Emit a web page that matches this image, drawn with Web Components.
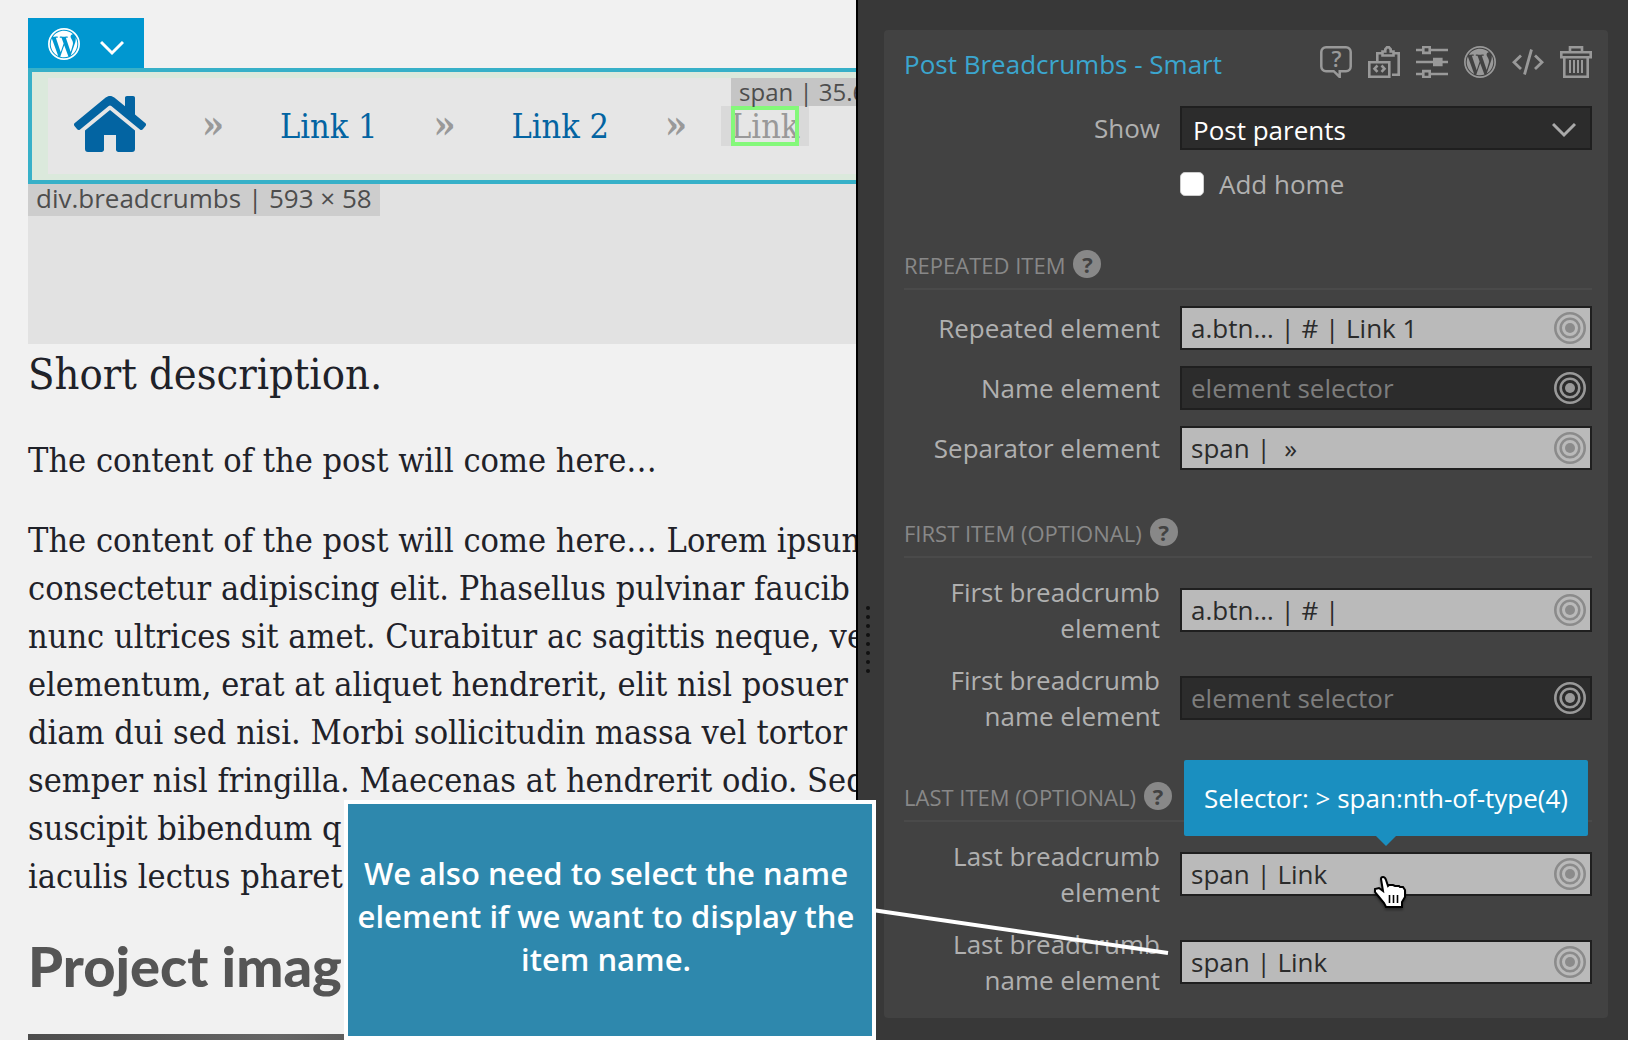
<!DOCTYPE html>
<html lang="en">
<head>
<meta charset="utf-8">
<meta name="viewport" content="width=device-width, initial-scale=1">
<title>Post Breadcrumbs - Smart</title>
<style>
  body {
    margin: 0;
    font-family: "Open Sans", "Noto Sans", sans-serif;
    font-size: 26px;
    line-height: 36px;
    color: #b0b0b0;
    background: #383838;
  }
</style>
</head>
<body>

<builder-app>
  <page-preview slot="preview">
    <bread-crumbs slot="selected"></bread-crumbs>
    <p class="lead">Short description.</p>
    <p>The content of the post will come here…</p>
    <p>The content of the post will come here… Lorem ipsum<br>
      consectetur adipiscing elit. Phasellus pulvinar faucib<br>
      nunc ultrices sit amet. Curabitur ac sagittis neque, ve<br>
      elementum, erat at aliquet hendrerit, elit nisl posuer<br>
      diam dui sed nisi. Morbi sollicitudin massa vel tortor<br>
      semper nisl fringilla. Maecenas at hendrerit odio. Sed<br>
      suscipit bibendum q<br>
      iaculis lectus pharet</p>
    <h2>Project imag</h2>
    <div class="photo"></div>
  </page-preview>

  <settings-panel slot="settings" heading="Post Breadcrumbs - Smart">
    <select-field label="Show" value="Post parents"></select-field>
    <check-field label="Add home"></check-field>
    <settings-section heading="Repeated item">
      <selector-field label="Repeated element" value="a.btn… | # | Link 1"></selector-field>
      <selector-field label="Name element"></selector-field>
      <selector-field label="Separator element" value="span |  »"></selector-field>
    </settings-section>
    <settings-section heading="First item (optional)">
      <selector-field label="First breadcrumb element" value="a.btn… | # |"></selector-field>
      <selector-field label="First breadcrumb name element"></selector-field>
    </settings-section>
    <settings-section heading="Last item (optional)">
      <selector-field label="Last breadcrumb element" value="span | Link">
        <tool-tip slot="tip">Selector: &gt; span:nth-of-type(4)</tool-tip>
        <hand-cursor slot="tip"></hand-cursor>
      </selector-field>
      <selector-field label="Last breadcrumb name element" value="span | Link"></selector-field>
    </settings-section>
  </settings-panel>

  <tour-callout slot="tour">We also need to select the name element if we want to display the item name.</tour-callout>
</builder-app>

<script>
const ICONS = {
  wordpress: `<svg viewBox="0 0 512 512" fill="currentColor"><path d="M61.7 169.4l101.5 278C92.2 413 43.3 340.2 43.3 256c0-30.9 6.6-60.1 18.4-86.6zm337.9 75.9c0-26.3-9.4-44.5-17.5-58.7-10.8-17.5-20.9-32.4-20.9-49.9 0-19.6 14.8-37.8 35.7-37.8.9 0 1.8.1 2.8.2-37.9-34.7-88.3-55.9-143.7-55.9-74.3 0-139.7 38.1-177.8 95.9 5 .2 9.7.3 13.7.3 22.2 0 56.7-2.7 56.7-2.7 11.5-.7 12.8 16.2 1.4 17.5 0 0-11.5 1.3-24.3 2l77.5 230.4L249.8 247l-33.1-90.8c-11.5-.7-22.3-2-22.3-2-11.5-.7-10.1-18.2 1.3-17.5 0 0 35.1 2.7 56 2.7 22.2 0 56.7-2.7 56.7-2.7 11.5-.7 12.8 16.2 1.4 17.5 0 0-11.5 1.3-24.3 2l76.9 228.7 21.2-70.9c9-29.4 16-50.5 16-68.7zm-139.9 29.3l-63.8 185.5c19.1 5.6 39.2 8.7 60.1 8.7 24.8 0 48.5-4.3 70.6-12.1-.6-.9-1.1-1.9-1.5-2.9l-65.4-179.2zm183-120.7c.9 6.8 1.4 14 1.4 21.9 0 21.6-4 45.8-16.2 76.2l-65 187.9C426.2 403 468.7 334.5 468.7 256c0-37-9.4-71.8-26-102.1z"/><circle cx="256" cy="256" r="242" fill="none" stroke="currentColor" stroke-width="27"/></svg>`,
  chevron: `<svg viewBox="0 0 24 24" fill="none" stroke="currentColor" stroke-width="3"><path d="M1 6l11 11L23 6"/></svg>`,
  home: `<svg viewBox="0 0 72 56" fill="currentColor"><path d="M36 0c1.700 0 3 .5 4.300 1.600L51 10.300V2c0-1.300.7-2 2-2h6c1.300 0 2 .7 2 2v16.500l10.200 8.600c1 .8 1.100 1.900.3 2.900l-2.700 3.200c-.8 1-1.900 1-2.900.2L37.300 10c-.9-.7-1.700-.7-2.600 0L6.100 33.400c-1 .8-2.100.8-2.900-.2L.5 30c-.8-1-.7-2.100.3-2.900L31.700 1.600C33 .5 34.300 0 36 0z"/><path d="M36 14l25 20.500V53c0 2-1 3-3 3H44.500c-1.500 0-2.500-1-2.500-2.500V39H30v14.500c0 1.500-1 2.500-2.500 2.500H14c-2 0-3-1-3-3V34.500z"/></svg>`,
  help: `<svg viewBox="0 0 32 32" fill="none" stroke="currentColor" stroke-width="2.500"><path d="M6 1.300h20a4.700 4.700 0 0 1 4.700 4.700v14.500a4.700 4.700 0 0 1-4.700 4.700h-6.300V31l-6-5.800H6a4.700 4.700 0 0 1-4.700-4.700V6A4.700 4.700 0 0 1 6 1.300z"/><text x="16.500" y="21" text-anchor="middle" font-family="Open Sans, sans-serif" font-weight="600" font-size="22" fill="currentColor" stroke="none">?</text></svg>`,
  clipboard: `<svg viewBox="0 0 32 32" fill="none" stroke="currentColor" stroke-width="2.600"><path d="M9.300 15V7.300H14M26 7.300h4.700v21.400H24M1.300 16.300h20v14.400h-20zM14.500 9.500v-4h2.800V3.300L19 1.300h2l1.700 2v2.200h2.800v4z"/><path d="M9.500 19.500l-3 3.200 3 3.200M13.500 19.500l3 3.200-3 3.200"/></svg>`,
  sliders: `<svg viewBox="0 0 32 32" fill="none" stroke="currentColor" stroke-width="2.600"><path d="M0 4h7M14 4h18M0 16h17M26 16h6M0 28h7M14 28h18M7.300.9h6.400v6H7.300zM7.300 25.100h6.400v6H7.300z"/><path fill="currentColor" d="M18.300 13h7v6h-7z"/></svg>`,
  code: `<svg viewBox="0 0 32 32" fill="none" stroke="currentColor" stroke-width="2.800"><path d="M9 9.500L2 16.300l7 6.800M23 9.500l7 6.800-7 6.800M19.500 3.500l-7 25"/></svg>`,
  trash: `<svg viewBox="0 0 32 32" fill="none" stroke="currentColor" stroke-width="2.600"><path d="M10 6V1.300h12V6M1.300 6.300h29.400v5H1.300zM4.300 11.500v19.200h23.400V11.500"/><path stroke-width="2" d="M10 14v13M14 14v13M18 14v13M22 14v13"/></svg>`,
  target: `<svg viewBox="0 0 32 32" fill="none" stroke="currentColor" stroke-width="2.600"><circle cx="16" cy="16" r="14.700"/><circle cx="16" cy="16" r="9.300"/><circle cx="16" cy="16" r="5" fill="currentColor" stroke="none"/></svg>`,
};

// Base class: stamps the static markup of a component into an open root.
class BuilderElement extends HTMLElement {
  connectedCallback() {
    if (this.shadowRoot) return;
    this.attachShadow({ mode: 'open' });
    this.shadowRoot.innerHTML = this.render();
  }
  attr(name) {
    return this.getAttribute(name) || '';
  }
}

const buttonReset = `
  button {
    display: block;
    border: 0;
    padding: 0;
    background: none;
    color: inherit;
    font: inherit;
    cursor: pointer;
  }
  svg { display: block; width: 100%; height: 100%; }
`;

const fieldRow = `
  :host {
    display: grid;
    grid-template-columns: minmax(0, 256fr) minmax(0, 412fr);
    column-gap: 20px;
    align-items: center;
  }
  label { text-align: right; }
`;

customElements.define('builder-app', class extends BuilderElement {
  render() {
    return `
      <style>
        :host {
          display: grid;
          grid-template-columns: minmax(0, 1fr) 772px;
          position: relative;
          height: 100vh;
          overflow: hidden;
        }
      </style>
      <slot name="preview"></slot>
      <slot name="settings"></slot>
      <slot name="tour"></slot>`;
  }
});

customElements.define('page-preview', class extends BuilderElement {
  render() {
    return `
      <style>
        :host {
          display: block;
          box-sizing: border-box;
          min-height: 0;
          padding: 18px 0 0 28px;
          overflow: hidden;
          background: #f1f1f1;
          color: #1f2229;
          font-family: "DejaVu Serif Condensed", "DejaVu Serif", serif;
          font-size: 34px;
          line-height: 48px;
          white-space: nowrap;
        }
        .selected {
          height: 326px;
          background: linear-gradient(#f1f1f1 50px, #e2e2e2 50px);
        }
        ::slotted(p) { margin: 0 0 32px; }
        ::slotted(.lead) { font-size: 43px; line-height: 60px; }
        ::slotted(h2) {
          margin: 0 0 35px;
          font-family: "Lato Black", Lato, sans-serif;
          font-weight: 900;
          font-size: 56px;
          line-height: 67px;
          color: #555;
        }
        ::slotted(.photo) {
          height: 400px;
          background: linear-gradient(90deg, #4c4c4c, #656565 30%, #4c4c4c 60%);
        }
      </style>
      <div class="selected"><slot name="selected"></slot></div>
      <slot></slot>`;
  }
});

customElements.define('bread-crumbs', class extends BuilderElement {
  render() {
    return `
      <style>
        ${buttonReset}
        :host { display: block; }
        .tab {
          display: flex;
          align-items: center;
          gap: 20px;
          width: 116px;
          height: 50px;
          box-sizing: border-box;
          padding: 2px 20px 0;
          background: #0097d0;
          color: #fff;
        }
        .logo { width: 32px; height: 32px; }
        .arrow { width: 24px; height: 24px; margin-top: 8px; }
        nav {
          margin-right: -40px;
          padding: 6px 16px;
          border: 4px solid #37b0c8;
          background: #dbe9dc;
        }
        ol {
          display: flex;
          align-items: center;
          gap: 55px;
          height: 96px;
          margin: 0;
          padding: 0 26px;
          list-style: none;
          background: #e6e6e6;
          color: #999;
        }
        a { color: #0364a2; text-decoration: none; }
        .home { display: block; width: 72px; height: 56px; margin-bottom: 4px; }
        .sep {
          display: flex;
          justify-content: center;
          width: 24px;
          padding-bottom: 4px;
          font-size: 40px;
          font-weight: 700;
        }
        .current {
          position: relative;
          margin-left: -22px;
          padding: 0 10px;
          line-height: 40px;
          background: #d9d9d9;
        }
        .current span { display: block; outline: 4px solid #84f87a; outline-offset: -4px; background: #e6e6e6; }
        .size {
          position: absolute;
          left: 10px;
          bottom: 40px;
          padding: 0 8px;
          line-height: 28px;
          background: #c5c5c5;
        }
        .tag {
          width: fit-content;
          padding: 0 8px 4px;
          line-height: 28px;
          background: #cdcdcd;
        }
        .size, .tag {
          font-family: "Open Sans", sans-serif;
          font-size: 26px;
          color: #4d4d4d;
        }
        .size { font-size: 24px; }
      </style>
      <button class="tab" type="button" aria-label="WordPress element">
        <span class="logo">${ICONS.wordpress}</span>
        <span class="arrow">${ICONS.chevron}</span>
      </button>
      <nav aria-label="Breadcrumbs">
        <ol>
          <li><a class="home" href="#" aria-label="Home">${ICONS.home}</a></li>
          <li class="sep">»</li>
          <li><a href="#">Link 1</a></li>
          <li class="sep">»</li>
          <li><a href="#">Link 2</a></li>
          <li class="sep">»</li>
          <li class="current"><span>Link</span><div class="size">span | 35.6</div></li>
        </ol>
      </nav>
      <div class="tag">div.breadcrumbs | 593 × 58</div>`;
  }
});

customElements.define('settings-panel', class extends BuilderElement {
  render() {
    const tools = [
      ['help', 'Help'], ['clipboard', 'Paste code'], ['sliders', 'Options'],
      ['wordpress', 'WordPress'], ['code', 'Code'], ['trash', 'Delete'],
    ];
    return `
      <style>
        ${buttonReset}
        :host {
          display: grid;
          grid-template-columns: 20px minmax(0, 1fr);
          column-gap: 6px;
          box-sizing: border-box;
          padding: 30px 20px 22px 0;
          border-left: 2px solid #000;
          background: #383838;
        }
        .grip {
          display: grid;
          align-self: center;
          justify-items: center;
          row-gap: 5px;
          padding-top: 230px;
        }
        .grip i { width: 4px; height: 4px; border-radius: 50%; background: #111; }
        section {
          align-self: start;
          padding: 16px 16px 20px 20px;
          border-radius: 4px;
          background: #424242;
        }
        header {
          display: flex;
          align-items: center;
          justify-content: space-between;
          height: 32px;
          margin-bottom: 28px;
        }
        h1 { margin: 4px 0 0; font-size: 26px; font-weight: 400; color: #3ba6cf; }
        .tools { display: flex; gap: 16px; color: #999; }
        .tools button { width: 32px; height: 32px; }
        .fields { display: grid; row-gap: 16px; }
      </style>
      <div class="grip">${'<i></i>'.repeat(8)}</div>
      <section>
        <header>
          <h1>${this.attr('heading')}</h1>
          <div class="tools">
            ${tools.map(([icon, name]) => `<button type="button" aria-label="${name}">${ICONS[icon]}</button>`).join('')}
          </div>
        </header>
        <div class="fields"><slot></slot></div>
      </section>`;
  }
});

customElements.define('settings-section', class extends BuilderElement {
  render() {
    return `
      <style>
        ${buttonReset}
        :host { display: grid; row-gap: 16px; margin-top: 32px; }
        header {
          display: flex;
          align-items: start;
          gap: 8px;
          height: 38px;
          border-bottom: 2px solid #4a4a4a;
          color: #888;
        }
        h2 {
          margin: 0;
          font-size: 22px;
          line-height: 30px;
          font-weight: 400;
          text-transform: uppercase;
        }
        button {
          width: 28px;
          height: 28px;
          border-radius: 50%;
          background: #888;
          color: #424242;
          font-size: 22px;
          font-weight: 700;
          line-height: 28px;
        }
      </style>
      <header>
        <h2>${this.attr('heading')}</h2>
        <button type="button" aria-label="About this section">?</button>
      </header>
      <slot></slot>`;
  }
});

customElements.define('select-field', class extends BuilderElement {
  render() {
    return `
      <style>
        ${fieldRow}
        .box { display: grid; align-items: center; }
        select, svg { grid-area: 1 / 1; }
        select {
          width: 100%;
          height: 44px;
          padding: 4px 11px 0;
          border: 2px solid #1f1f1f;
          border-radius: 0;
          background: #2c2c2c;
          color: #fff;
          font: inherit;
          appearance: none;
        }
        svg {
          justify-self: end;
          width: 24px;
          height: 24px;
          margin: 4px 16px 0 0;
          color: #aaa;
          pointer-events: none;
        }
      </style>
      <label for="field">${this.attr('label')}</label>
      <div class="box">
        <select id="field"><option>${this.attr('value')}</option></select>
        ${ICONS.chevron}
      </div>`;
  }
});

customElements.define('check-field', class extends BuilderElement {
  render() {
    return `
      <style>
        ${fieldRow}
        label {
          grid-column: 2;
          display: flex;
          align-items: center;
          gap: 15px;
          text-align: left;
        }
        input {
          width: 24px;
          height: 24px;
          margin: 0;
          border: 1px solid #ccc;
          border-radius: 5px;
          background: #fff;
          appearance: none;
        }
        input:checked { background: #3ba6cf; }
      </style>
      <label><input type="checkbox">${this.attr('label')}</label>`;
  }
});

customElements.define('selector-field', class extends BuilderElement {
  render() {
    const value = this.attr('value');
    return `
      <style>
        ${buttonReset}
        ${fieldRow}
        .box {
          display: flex;
          align-items: center;
          position: relative;
          height: 40px;
          padding: 0 4px 0 9px;
          border: 2px solid #1f1f1f;
          background: ${value ? '#bababa' : '#2c2c2c'};
        }
        input {
          flex: 1;
          min-width: 0;
          height: 36px;
          padding: 0;
          border: 0;
          outline: 0;
          background: none;
          color: #2b2b2b;
          font: inherit;
        }
        input::placeholder { color: #7d7d7d; opacity: 1; }
        button { width: 32px; height: 32px; color: ${value ? '#8b8b8b' : '#999'}; }
      </style>
      <label for="field">${this.attr('label')}</label>
      <div class="box">
        <input id="field" type="text" placeholder="element selector" value="${value}">
        <button type="button" aria-label="Pick element">${ICONS.target}</button>
        <slot name="tip"></slot>
      </div>`;
  }
});

customElements.define('tool-tip', class extends BuilderElement {
  render() {
    return `
      <style>
        :host {
          position: absolute;
          left: 50%;
          bottom: 58px;
          transform: translateX(-50%);
          padding: 20px;
          border-radius: 2px;
          background: #1a8fc0;
          color: #fff;
          font-size: 26px;
          font-weight: 500;
          white-space: nowrap;
        }
        :host::after {
          content: "";
          position: absolute;
          top: 100%;
          left: 50%;
          margin-left: -10px;
          border: 10px solid transparent;
          border-top-color: #1a8fc0;
          border-bottom: 0;
        }
      </style>
      <slot></slot>`;
  }
});

customElements.define('hand-cursor', class extends BuilderElement {
  render() {
    return `
      <style>
        :host {
          position: absolute;
          left: 47%;
          top: 22px;
          width: 32px;
          height: 36px;
          pointer-events: none;
          filter: drop-shadow(0 2px 1px rgb(0 0 0 / .4));
        }
        svg { display: block; }
      </style>
      <svg width="32" height="36" viewBox="0 0 32 36" aria-hidden="true">
        <path fill="#fff" stroke="#000" stroke-width="2" d="M7 3Q7 1 9 1t3 3l2 6 1-1h4l2 1h4l1 1h3l2 3v7l-3 5v5H12l-2-4-5-6-4-5v-3l4-1 4 3z"/>
        <path stroke="#000" stroke-width="1.600" d="M15.500 19v8M19.500 19v8M23.500 19v8"/>
      </svg>`;
  }
});

customElements.define('tour-callout', class extends BuilderElement {
  render() {
    return `
      <style>
        :host {
          position: absolute;
          right: 752px;
          bottom: 0;
          display: grid;
          place-items: center;
          box-sizing: border-box;
          width: 532px;
          height: 240px;
          padding: 0 16px 8px 8px;
          border: 4px solid #fff;
          background: #2e88ad;
          color: #fff;
          font-size: 31px;
          font-weight: 600;
          line-height: 43px;
          text-align: center;
        }
        svg {
          position: absolute;
          left: 100%;
          top: 100px;
          width: 300px;
          height: 52px;
        }
      </style>
      <div><slot></slot></div>
      <svg viewBox="0 0 300 52" aria-hidden="true">
        <path stroke="#fff" stroke-width="4" d="M0 6l296 43"/>
      </svg>`;
  }
});
</script>
</body>
</html>
